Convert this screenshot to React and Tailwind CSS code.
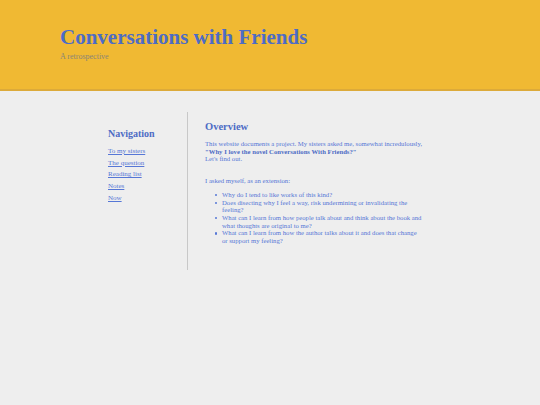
export default function App() {
  const links = ['To my sisters', 'The question', 'Reading list', 'Notes', 'Now']
  const questions = [
    'Why do I tend to like works of this kind?',
    'Does disecting why I feel a way, risk undermining or invalidating the feeling?',
    'What can I learn from how people talk about and think about the book and what thoughts are original to me?',
    'What can I learn from how the author talks about it and does that change or support my feeling?',
  ]

  return (
    <div className="min-h-[405px] bg-[#eeeeee] font-['Liberation_Serif',serif]">
      <header className="h-[91px] bg-[#f0b933] border-b-2 border-[#dcaa3a] pl-[60px] pt-[24px]">
        <h1 className="text-[21px] leading-[26px] font-bold text-[#4d6cc5]">Conversations with Friends</h1>
        <p className="mt-[2px] text-[8px] leading-[10px] text-[#8a8578]">A retrospective</p>
      </header>

      <div className="flex pt-[21px]">
        <nav className="w-[80px] ml-[108px] border-r border-[#c8c8c8] pt-[16px] h-[158px]">
          <h2 className="text-[10px] leading-[12px] font-bold text-[#4d6cc5]">Navigation</h2>
          <ul className="mt-[6px] flex flex-col text-[7px] leading-[11.7px] text-[#5677d6]">
            {links.map((l) => (
              <li key={l}>
                <a href="#" className="underline">{l}</a>
              </li>
            ))}
          </ul>
        </nav>

        <main className="ml-[17px] w-[218px] pt-[8px] text-[6.7px] leading-[7.7px] text-[#5677d6]">
          <h2 className="text-[10.5px] leading-[13px] font-bold text-[#4d6cc5]">Overview</h2>
          <p className="mt-[7px]">
            This website documents a project. My sisters asked me, somewhat incredulously,
            <br />
            <strong className="text-[#4d6cc5]">"Why I love the novel Conversations With Friends?"</strong>
            <br />
            Let's find out.
          </p>
          <p className="mt-[14px]">I asked myself, as an extension:</p>
          <ul className="mt-[6px] pl-[10px]">
            {questions.map((q) => (
              <li key={q} className="flex">
                <span className="w-[7px] shrink-0 pt-[3px]">
                  <span className="block w-[2.2px] h-[2.2px] rounded-full bg-[#5677d6]" />
                </span>
                <span>{q}</span>
              </li>
            ))}
          </ul>
        </main>
      </div>
    </div>
  )
}
